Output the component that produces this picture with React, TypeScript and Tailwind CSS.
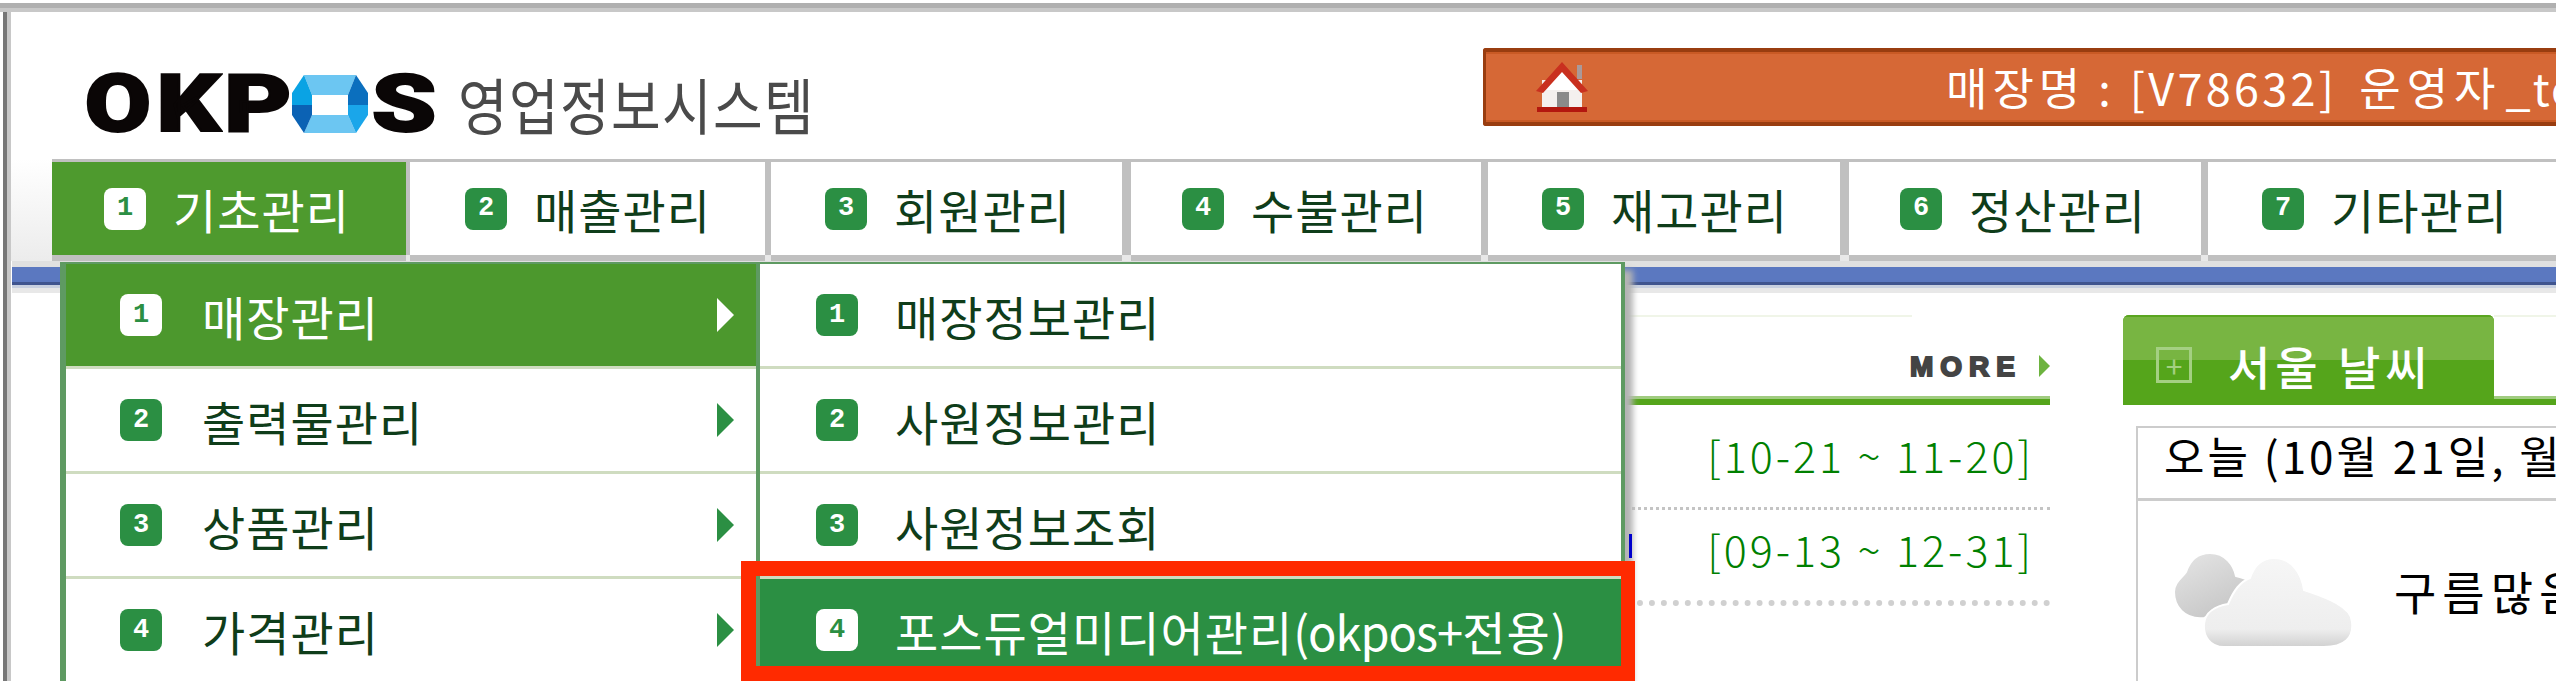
const TABS = [
  { n: '1', label: '기초관리', w: 'w-[354px] pl-[52px]', sep: 'w-[4px]', active: true },
  { n: '2', label: '매출관리', w: 'w-[355px] pl-[55px]', sep: 'w-[6px]', active: false },
  { n: '3', label: '회원관리', w: 'w-[351px] pl-[54px]', sep: 'w-[9px]', active: false },
  { n: '4', label: '수불관리', w: 'w-[350px] pl-[51px]', sep: 'w-[7px]', active: false },
  { n: '5', label: '재고관리', w: 'w-[352px] pl-[54px]', sep: 'w-[9px]', active: false },
  { n: '6', label: '정산관리', w: 'w-[352px] pl-[51px]', sep: 'w-[7px]', active: false },
  { n: '7', label: '기타관리', w: 'flex-1 pl-[54px]', sep: '', active: false },
];

const LEFT_MENU = ['매장관리', '출력물관리', '상품관리', '가격관리'];
const RIGHT_MENU = [
  <>매장정보관리</>,
  <>사원정보관리</>,
  <>사원정보조회</>,
  <>
    포스듀얼미디어관리<span className="tracking-[-1px]">(okpos+</span>전용<span>)</span>
  </>,
];

function Badge({ n, inverted }: { n: string; inverted?: boolean }) {
  return (
    <span
      className={
        'flex h-[42px] w-[42px] shrink-0 items-center justify-center rounded-[8px] font-["Liberation_Mono",monospace] text-[27px] font-bold leading-none ' +
        (inverted ? 'bg-white text-[#2b8f43]' : 'bg-[#2b8f43] text-white')
      }
    >
      {n}
    </span>
  );
}

function Logo() {
  return (
    <div className="-ml-[2px] flex items-center">
      <div className="flex h-[60px] items-center font-['Roboto',sans-serif] text-[80px] font-black leading-none text-[#0a0606] [-webkit-text-stroke:2px_#0a0606]">
        <span className="flex w-[70px] scale-x-[1.2] justify-center">O</span>
        <span className="flex w-[71px] scale-x-[1.25] justify-center">K</span>
        <span className="flex w-[68px] scale-x-[1.3] justify-center">P</span>
        <svg width="76" height="58" viewBox="0 0 76 58" className="shrink-0">
          <polygon points="12,0 64,0 56,20 20,20" fill="#6cc6f2" />
          <polygon points="20,40 56,40 64,58 12,58" fill="#6cc6f2" />
          <polygon points="12,0 20,20 20,30 0,30 0,18" fill="#0aa3e4" />
          <polygon points="0,30 20,30 20,40 12,58 0,40" fill="#0b62b4" />
          <polygon points="64,0 76,18 76,30 56,30 56,20" fill="#0b6fbe" />
          <polygon points="76,30 76,40 64,58 56,40 56,30" fill="#1aa6ea" />
          <rect x="20" y="20" width="36" height="20" fill="#ffffff" />
        </svg>
        <span className="flex w-[72px] scale-x-[1.3] justify-center">S</span>
      </div>
      <span className="ml-[18px] scale-y-[1.14] whitespace-nowrap text-[54px] font-normal leading-none tracking-[1.3px] text-[#4a4a4a]">
        영업정보시스템
      </span>
    </div>
  );
}

function HomeIcon() {
  return (
    <svg width="60" height="52" viewBox="0 0 60 52" className="shrink-0">
      <rect x="45" y="5" width="5" height="14" fill="#a99" />
      <rect x="10" y="20" width="40" height="28" fill="#f4f0ee" />
      <polygon points="30,9 46,30 14,30" fill="#ffffff" />
      <path d="M30 2 L56 31 L49 33 L30 12 L11 33 L4 31 Z" fill="#c9301f" />
      <rect x="25" y="32" width="12" height="16" fill="#8a8a8a" />
      <rect x="5" y="47" width="50" height="5" fill="#b3170f" />
    </svg>
  );
}

function CloudIcon() {
  return (
    <svg width="180" height="96" viewBox="0 0 180 96" className="shrink-0">
      <defs>
        <linearGradient id="back" x1="0" y1="0" x2="0.6" y2="1">
          <stop offset="0" stopColor="#e6e6e6" />
          <stop offset="1" stopColor="#c6c6c6" />
        </linearGradient>
        <linearGradient id="front" x1="0" y1="0" x2="0" y2="1">
          <stop offset="0" stopColor="#f6f6f6" />
          <stop offset="0.8" stopColor="#eeeeee" />
          <stop offset="1" stopColor="#d0d0d0" />
        </linearGradient>
      </defs>
      <path d="M36 1 C52 1 60 14 62 24 C72 26 80 30 76 36 C62 46 50 60 30 66 C10 68 0 54 0 40 C0 30 8 26 12 20 C16 8 24 1 36 1 Z" fill="url(#back)" stroke="#fff" strokeWidth="2" />
      <path d="M100 6 C118 6 128 22 130 38 C140 42 178 52 178 70 C180 86 170 95 150 95 L50 95 C36 95 29 84 30 72 C31 60 42 54 54 52 C60 38 66 30 76 26 C80 14 88 6 100 6 Z" fill="url(#front)" stroke="#fff" strokeWidth="2" />
    </svg>
  );
}

export default function App() {
  return (
    <div className="relative flex h-[681px] w-[2556px] flex-col overflow-hidden bg-white font-['Noto_Sans_CJK_KR',sans-serif] font-normal text-[#0f3d1a]">
      <div className="mt-[3px] h-[5px] shrink-0 bg-[#b0b0b0]" />
      <div className="h-[4px] shrink-0 bg-[#c8c8c8]" />
      <div className="flex min-h-0 flex-1">
        <div className="ml-[3px] w-[4px] shrink-0 bg-[#777777]" />
        <div className="w-[4px] shrink-0 bg-[#c8c8c8]" />
        <div className="flex min-w-0 flex-1 flex-col">
          {/* header */}
          <div className="flex h-[147px] shrink-0 items-start justify-between pl-[74px]">
            <div className="pt-[62px]">
              <Logo />
            </div>
            <div className="mt-[36px] flex h-[78px] w-[1073px] items-center overflow-hidden rounded-l-[3px] border-y-[4px] border-l-[3px] border-[#993d10] bg-[#d66836] pb-[2px] pl-[46px] shadow-[inset_0_2px_0_#c95a25,inset_0_-2px_0_#c95a25]">
              <HomeIcon />
              <span className="ml-[354px] flex items-baseline whitespace-nowrap text-[45px] leading-none text-white">
                <span className="tracking-[5px]">매장명</span>
                <span className="ml-[13px]">:</span>
                <span className="ml-[19px] tracking-[3.3px]">[V78632]</span>
                <span className="ml-[22px] tracking-[6px]">운영자</span>
                <span className="ml-[4px] tracking-[2px]">_te</span>
              </span>
            </div>
          </div>

          {/* nav */}
          <div className="flex h-[102px] shrink-0 bg-gradient-to-b from-white to-[#ececec] pl-[41px]">
            {TABS.map((t) => (
              <div key={t.n} className="contents">
                <div
                  className={
                    'flex items-center gap-[27px] border-t-[3px] border-b-[6px] border-[#c0c0c0] ' +
                    t.w +
                    (t.active ? ' bg-[#4e9a2e] text-white' : ' bg-white')
                  }
                >
                  <Badge n={t.n} inverted={t.active} />
                  <span className="whitespace-nowrap text-[47px] leading-none tracking-[1px]">{t.label}</span>
                </div>
                {t.sep && (
                  <div className={'flex flex-col ' + t.sep}>
                    <div className="flex-1 bg-[#c0c0c0]" />
                    <div className="h-[6px] bg-[#e8e8e8]" />
                  </div>
                )}
              </div>
            ))}
          </div>

          {/* blue band */}
          <div className="ml-[1px] h-[6px] shrink-0 bg-[#e0e0e0]" />
          <div className="ml-[1px] h-[15px] shrink-0 bg-[#5b78c0]" />
          <div className="ml-[1px] h-[3px] shrink-0 bg-[#40558f]" />
          <div className="ml-[1px] h-[3px] shrink-0 bg-[#c8d0e0]" />
          <div className="ml-[1px] h-[5px] shrink-0 bg-[#e8e8e8]" />

          {/* body */}
          <div className="flex min-h-0 flex-1 pl-[1614px] pt-[22px]">
            <div className="flex w-[425px] shrink-0 flex-col">
              <div className="h-[2px] w-[287px] bg-[#f0f5e8]" />
              <div className="flex h-[79px] items-start justify-end gap-[17px] pt-[38px]">
                <span className="font-['Liberation_Sans',sans-serif] text-[28px] font-black leading-[24px] tracking-[7px] text-[#444444] [-webkit-text-stroke:2px_#444444]">
                  MORE
                </span>
                <svg width="11" height="22" viewBox="0 0 11 22">
                  <polygon points="0,0 11,11 0,22" fill="#6db33f" />
                </svg>
              </div>
              <div className="h-[3px] bg-[#a0cc80]" />
              <div className="h-[6px] bg-[#55a51b]" />
              <div className="flex h-[105px] items-center justify-end border-b-[3px] border-dotted border-[#c4c4c4] pb-[3px] pr-[16px] text-[43px] font-light leading-none tracking-[3px] text-[#008000]">
                [10-21 ~ 11-20]
              </div>
              <div className="flex h-[96px] items-center justify-end border-b-[6px] border-dotted border-[#d0d0d0] pb-[14px] pr-[16px] text-[43px] font-light leading-none tracking-[3px] text-[#008000]">
                [09-13 ~ 12-31]
              </div>
            </div>

            <div className="ml-[73px] flex min-w-0 flex-1 flex-col">
              <div className="flex h-[90px] shrink-0">
                <div className="flex w-[371px] shrink-0 flex-col overflow-hidden rounded-t-[6px] bg-[#55a51b]">
                  <div className="h-[45px] border-t-[2px] border-[#5aa520] bg-[#78b542]" />
                  <div className="flex-1" />
                </div>
                <div className="flex min-w-0 flex-1 flex-col">
                  <div className="h-[2px] bg-[#f0f5e8]" />
                  <div className="flex-1" />
                  <div className="h-[3px] bg-[#a0cc80]" />
                  <div className="h-[6px] bg-[#55a51b]" />
                </div>
              </div>
              <div className="ml-[13px] mt-[21px] flex flex-1 flex-col border-l-[2px] border-t-[2px] border-[#cccccc] text-black">
                <div className="flex h-[73px] shrink-0 items-start border-b-[3px] border-[#cccccc] pl-[26px] pt-[5px]">
                  <span className="whitespace-nowrap text-[44px] leading-none tracking-[3px]">오늘 (10월 21일, 월</span>
                </div>
                <div className="flex flex-1 items-start pl-[36px] pt-[51px]">
                  <CloudIcon />
                  <span className="ml-[40px] mt-[15px] whitespace-nowrap text-[46px] leading-none tracking-[6px]">구름많음</span>
                </div>
              </div>
            </div>
          </div>
        </div>
      </div>

      {/* weather tab label, over the green tab */}
      <div className="absolute left-[2156px] top-[342px] flex items-center gap-[36px] text-white">
        <span className="flex h-[36px] w-[36px] items-center justify-center border-[3px] border-[#a4d082] text-[30px] leading-none text-[#a4d082]">+</span>
        <span className="whitespace-nowrap text-[46px] font-medium leading-none tracking-[5px]">서울 날씨</span>
      </div>

      {/* dropdown menu */}
      <div className="absolute left-[60px] top-[262px] flex h-[419px] w-[1565px] border-l-[6px] border-r-[4px] border-t-[2px] border-[#5e9a62] bg-white shadow-[10px_6px_6px_-2px_#b4b4b4]">
        <div className="flex w-[690px] shrink-0 flex-col">
          {LEFT_MENU.map((label, i) => (
            <div
              key={label}
              className={
                'flex h-[105px] shrink-0 items-center border-b-[3px] border-[#cfdcc0] pl-[54px] ' +
                (i === 0 ? 'bg-[#4c982d] text-white' : '')
              }
            >
              <Badge n={String(i + 1)} inverted={i === 0} />
              <span className="ml-[40px] flex-1 whitespace-nowrap text-[47px] leading-none tracking-[1px]">{label}</span>
              <svg width="17" height="34" viewBox="0 0 17 34" className="mr-[22px]">
                <polygon points="0,0 17,17 0,34" fill={i === 0 ? '#ffffff' : '#2b8f43'} />
              </svg>
            </div>
          ))}
        </div>
        <div className="w-[4px] shrink-0 bg-[#5e9a62]" />
        <div className="flex min-w-0 flex-1 flex-col">
          {RIGHT_MENU.map((label, i) => (
            <div
              key={i}
              className={
                'flex h-[105px] shrink-0 items-center border-b-[3px] border-[#cfdcc0] pl-[56px] ' +
                (i === 3 ? 'bg-[#2b8f43] text-white' : '')
              }
            >
              <Badge n={String(i + 1)} inverted={i === 3} />
              <span className="ml-[37px] whitespace-nowrap text-[47px] leading-none tracking-[1px]">{label}</span>
            </div>
          ))}
        </div>
      </div>

      {/* blue cut-off link showing past the menu */}
      <div className="absolute left-[1629px] top-[534px] h-[24px] w-[3px] bg-[#0000cc]" />

      {/* red highlight annotation */}
      <div className="absolute left-[741px] top-[561px] h-[120px] w-[894px] border-[15px] border-r-[14px] border-[#ff2a00]" />
    </div>
  );
}
